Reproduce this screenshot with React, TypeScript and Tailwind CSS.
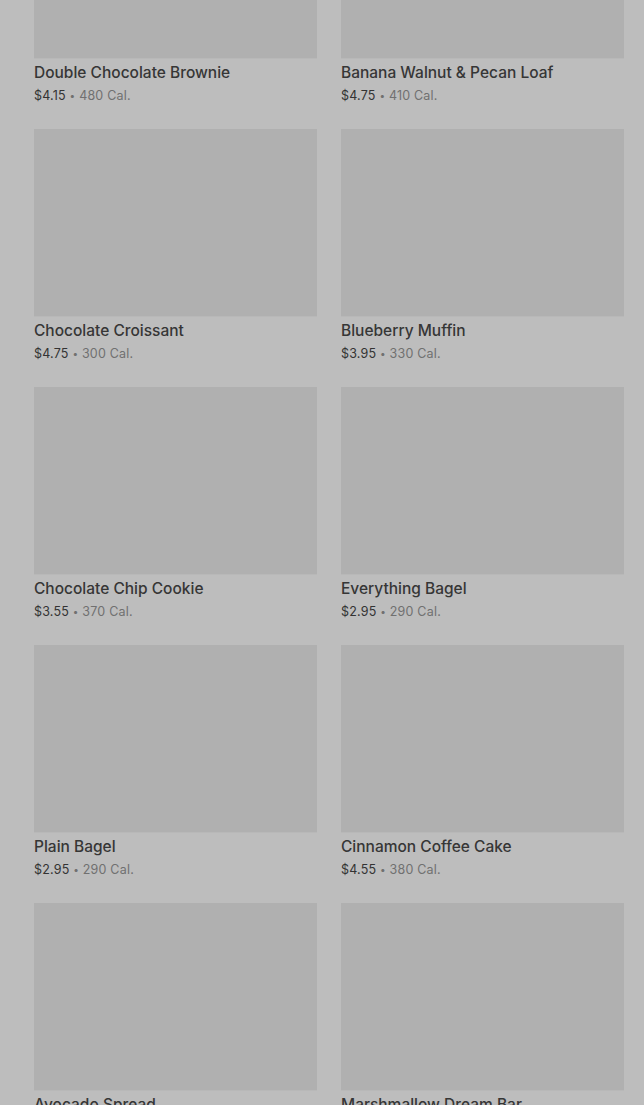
import React from "react";

const items = [
  ["Double Chocolate Brownie", "$4.15", "480 Cal."],
  ["Banana Walnut & Pecan Loaf", "$4.75", "410 Cal."],
  ["Chocolate Croissant", "$4.75", "300 Cal."],
  ["Blueberry Muffin", "$3.95", "330 Cal."],
  ["Chocolate Chip Cookie", "$3.55", "370 Cal."],
  ["Everything Bagel", "$2.95", "290 Cal."],
  ["Plain Bagel", "$2.95", "290 Cal."],
  ["Cinnamon Coffee Cake", "$4.55", "380 Cal."],
  ["Avocado Spread", "$1.25", "90 Cal."],
  ["Marshmallow Dream Bar", "$2.95", "230 Cal."],
];

export default function App() {
  return (
    <div
      className="w-full h-[1105px] overflow-hidden bg-[#bdbdbd]"
      style={{ fontFamily: "Inter, 'Noto Sans', sans-serif" }}
    >
      <div className="-mt-[129px] pl-[34px] pr-[20px] grid grid-cols-2 gap-x-[24px] gap-y-[23px]">
        {items.map(([name, price, cal]) => (
          <div key={name} className="flex flex-col">
            <div className="h-[188px] bg-[#b0b0b0] border-b border-[#b8b8b8]" />
            <div className="mt-[3px] h-[22px] text-[15.5px] leading-[22px] font-medium text-[#363636]">
              {name}
            </div>
            <div className="mt-[2px] h-[20px] text-[12.5px] leading-[20px] tracking-[0.2px]">
              <span className="text-[#333333]">{price}</span>
              <span className="text-[#707070]">
                {" "}
                <span className="text-[10px] leading-none align-[1px]">•</span> {cal}
              </span>
            </div>
          </div>
        ))}
      </div>
    </div>
  );
}
